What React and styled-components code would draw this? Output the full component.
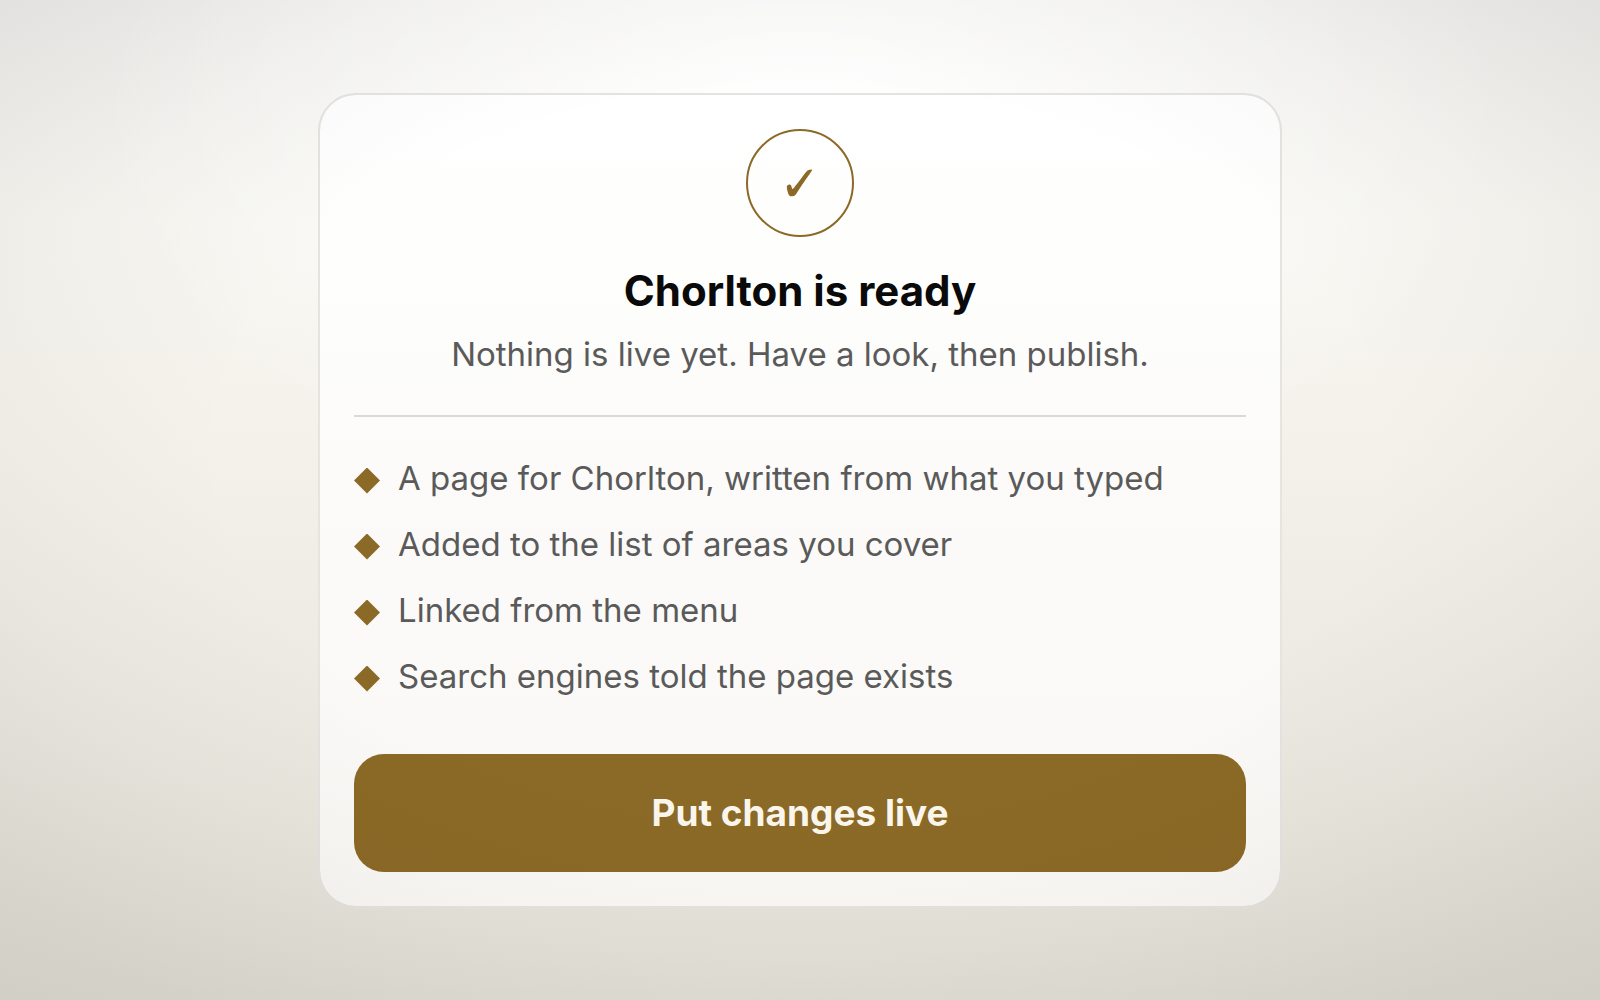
import React from 'react';
import styled, { createGlobalStyle } from 'styled-components';

const GlobalStyle = createGlobalStyle`
  :root {
    --accent-color: #8b6926;
    --heading-color: #0a0a0a;
    --text-color: #5a5a5a;
  }
  * {
    box-sizing: border-box;
  }
  body {
    margin: 0;
    font-family: Inter, 'Liberation Sans', sans-serif;
  }
`

const Page = styled.main`
  position: relative;
  display: flex;
  align-items: center;
  justify-content: center;
  min-height: 100vh;
  padding: 32px;
  background:
    radial-gradient(ellipse 45% 40% at 50% 12%, #ffffff 0%, rgba(255, 255, 255, 0) 100%),
    linear-gradient(180deg, #f4f3f1 0%, #f8f7f2 22%, #f4f1ea 45%, #eeebe4 65%, #e4e1d8 100%);
`

// soft darkening towards the corners, lies over the card as well
const Vignette = styled.div`
  position: absolute;
  inset: 0;
  pointer-events: none;
  background: radial-gradient(
    ellipse 75% 75% at 50% 45%,
    rgba(50, 46, 40, 0) 48%,
    rgba(50, 46, 40, 0.03) 67%,
    rgba(50, 46, 40, 0.09) 90%,
    rgba(50, 46, 40, 0.1) 100%
  );
`

const Card = styled.section`
  width: 100%;
  max-width: 964px;
  padding: 34px;
  border: 2px solid #e5e4e1;
  border-radius: 38px;
  background: linear-gradient(180deg, #ffffff 0%, #fefefd 20%, #fbfaf8 55%, #faf9f6 100%);
  background-clip: padding-box;
`

const Header = styled.header`
  display: flex;
  flex-direction: column;
  align-items: center;
  padding-bottom: 36px;
  border-bottom: 2px solid #d9d9d9;
  text-align: center;
`

const Badge = styled.div`
  display: flex;
  align-items: center;
  justify-content: center;
  width: 108px;
  height: 108px;
  border: 2px solid var(--accent-color);
  border-radius: 50%;
  color: var(--accent-color);
`

const Heading = styled.h1`
  margin: 28px 0 0;
  font-size: 42px;
  font-weight: 700;
  line-height: 52px;
  color: var(--heading-color);
`

const Details = styled.p`
  margin: 12px 0 0;
  font-size: 33px;
  line-height: 50px;
  color: var(--text-color);
`

const List = styled.ul`
  display: flex;
  flex-direction: column;
  gap: 16px;
  margin: 0;
  padding: 36px 0 53px;
  list-style: none;
`

const Item = styled.li`
  display: flex;
  align-items: center;
  gap: 18px;
  font-size: 33px;
  line-height: 50px;
  color: var(--text-color);
`

const Diamond = styled.span`
  flex: none;
  width: 26px;
  height: 26px;
  margin-top: 6px;
  background: var(--accent-color);
  clip-path: polygon(50% 0, 100% 50%, 50% 100%, 0 50%);
`

const Button = styled.button`
  display: block;
  width: 100%;
  height: 118px;
  border: 0;
  border-radius: 30px;
  background: var(--accent-color);
  color: #faf6ec;
  font-family: inherit;
  font-size: 37px;
  font-weight: 700;
  cursor: pointer;
`

const steps = [
  'A page for Chorlton, written from what you typed',
  'Added to the list of areas you cover',
  'Linked from the menu',
  'Search engines told the page exists',
];

function CheckIcon() {
  return (
    <svg width="44" height="44" viewBox="0 0 44 44" fill="currentColor" aria-hidden="true">
      <path d="M8.8 26C8.8 24.4 10.4 23.4 11.8 23.6C13.8 24 13.6 27.8 14.6 28C15.8 28 25.6 13.4 28.6 10.4C29.8 9.2 33.2 8.2 34 8.8C34.4 9.4 33 11 32 12.6C27 19.4 22 27.2 18 33.2C17.2 34.4 15.8 35.2 14 35.2C12 35.2 11.2 34.8 10.6 33.4C9.8 31.2 8.8 28.4 8.8 26Z" />
    </svg>
  )
}

export default function App() {
  return (
    <>
      <GlobalStyle />
      <Page>
        <Card>
          <Header>
            <Badge><CheckIcon /></Badge>
            <Heading>Chorlton is ready</Heading>
            <Details>Nothing is live yet. Have a look, then publish.</Details>
          </Header>
          <List>
            {steps.map(step => (
              <Item key={step}><Diamond />{step}</Item>
            ))}
          </List>
          <Button type="button">Put changes live</Button>
        </Card>
        <Vignette />
      </Page>
    </>
  )
}
